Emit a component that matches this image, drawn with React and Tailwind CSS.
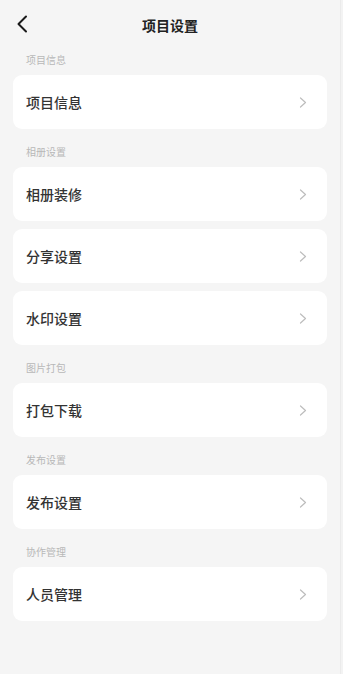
import React from "react";

const sections = [
  { title: "项目信息", items: ["项目信息"] },
  { title: "相册设置", items: ["相册装修", "分享设置", "水印设置"] },
  { title: "图片打包", items: ["打包下载"] },
  { title: "发布设置", items: ["发布设置"] },
  { title: "协作管理", items: ["人员管理"] },
];

function Chevron() {
  return (
    <svg width="8" height="11" viewBox="0 0 8 11" fill="none">
      <path d="M1.5 1L6.5 5.5L1.5 10" stroke="#bdbdbd" strokeWidth="1.2" strokeLinecap="round" strokeLinejoin="round" />
    </svg>
  );
}

export default function App() {
  return (
    <div
      className="min-h-[674px] w-[343px] bg-[#f5f5f5] flex"
      style={{ fontFamily: '"Noto Sans CJK SC", "Noto Sans", sans-serif' }}
    >
      <div className="w-[340px] flex flex-col">
        {/* Header */}
        <div className="relative h-[50px] flex items-center justify-center">
          <button className="absolute left-[16px] top-[15px] p-0">
            <svg width="12" height="18" viewBox="0 0 12 18" fill="none">
              <path d="M10 1.5L2.5 9L10 16.5" stroke="#1a1a1a" strokeWidth="2" strokeLinecap="round" strokeLinejoin="round" />
            </svg>
          </button>
          <h1 className="text-[14px] font-bold text-[#222] leading-none">项目设置</h1>
        </div>

        {sections.map((section, si) => (
          <div key={section.title}>
            <div
              className={`${si === 0 ? "h-[25px]" : "h-[38px]"} flex items-end pb-[8px] px-[26px] text-[10px] leading-[14px] text-[#b8b8b8]`}
            >
              {section.title}
            </div>
            <div className="flex flex-col gap-[8px] px-[13px]">
              {section.items.map((item) => (
                <div
                  key={item}
                  className="h-[54px] bg-white rounded-[9px] flex items-center justify-between pl-[13px] pr-[20px]"
                >
                  <span className="text-[14px] font-medium text-[#333]">{item}</span>
                  <Chevron />
                </div>
              ))}
            </div>
          </div>
        ))}
      </div>
      <div className="w-[3px] bg-[#f3f3f3] border-l border-[#ebebeb]" />
    </div>
  );
}
